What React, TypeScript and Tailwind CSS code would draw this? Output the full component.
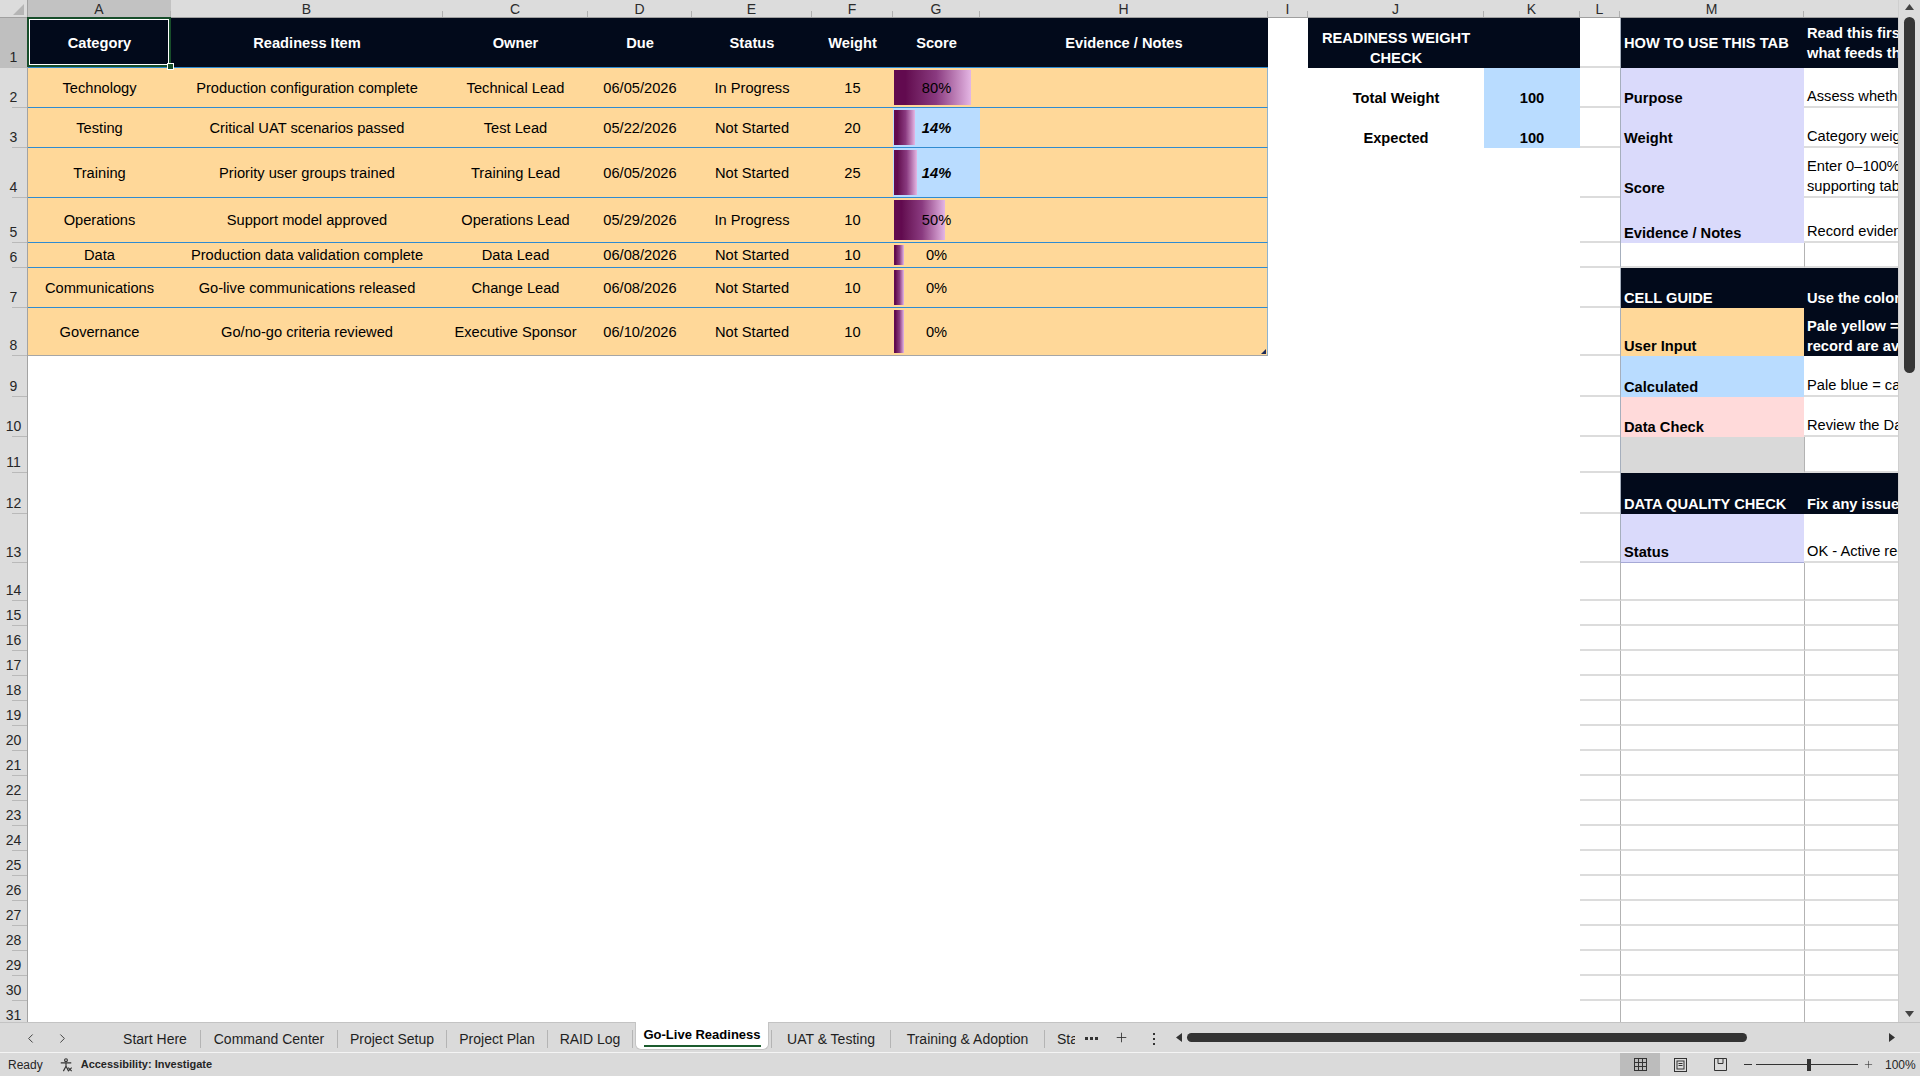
import React from "react";
import { ChevronLeft, ChevronRight, Plus } from "lucide-react";

type TRow = {
  cat: string;
  item: string;
  owner: string;
  due: string;
  status: string;
  weight: number;
  score: number;
  calc?: boolean;
  bar: number;
};

const tableRows: TRow[] = [
  { cat: "Technology", item: "Production configuration complete", owner: "Technical Lead", due: "06/05/2026", status: "In Progress", weight: 15, score: 80, bar: 77 },
  { cat: "Testing", item: "Critical UAT scenarios passed", owner: "Test Lead", due: "05/22/2026", status: "Not Started", weight: 20, score: 14, calc: true, bar: 21 },
  { cat: "Training", item: "Priority user groups trained", owner: "Training Lead", due: "06/05/2026", status: "Not Started", weight: 25, score: 14, calc: true, bar: 23 },
  { cat: "Operations", item: "Support model approved", owner: "Operations Lead", due: "05/29/2026", status: "In Progress", weight: 10, score: 50, bar: 51 },
  { cat: "Data", item: "Production data validation complete", owner: "Data Lead", due: "06/08/2026", status: "Not Started", weight: 10, score: 0, bar: 10 },
  { cat: "Communications", item: "Go-live communications released", owner: "Change Lead", due: "06/08/2026", status: "Not Started", weight: 10, score: 0, bar: 10 },
  { cat: "Governance", item: "Go/no-go criteria reviewed", owner: "Executive Sponsor", due: "06/10/2026", status: "Not Started", weight: 10, score: 0, bar: 10 },
];

const headers = ["Category", "Readiness Item", "Owner", "Due", "Status", "Weight", "Score", "Evidence / Notes"];
const colLetters = ["A", "B", "C", "D", "E", "F", "G", "H", "I", "J", "K", "L", "M", ""];

type PanelKind = "dark" | "lav" | "orange" | "blue" | "pink" | "grey" | "white";

const mSpec: { kind: PanelKind; text?: string }[] = [
  { kind: "dark", text: "HOW TO USE THIS TAB" },
  { kind: "lav", text: "Purpose" },
  { kind: "lav", text: "Weight" },
  { kind: "lav", text: "Score" },
  { kind: "lav", text: "Evidence / Notes" },
  { kind: "white" },
  { kind: "dark", text: "CELL GUIDE" },
  { kind: "orange", text: "User Input" },
  { kind: "blue", text: "Calculated" },
  { kind: "pink", text: "Data Check" },
  { kind: "grey" },
  { kind: "dark", text: "DATA QUALITY CHECK" },
  { kind: "lav", text: "Status" },
];

const mClass: Record<PanelKind, string> = {
  dark: "bg-[#020a1b] text-white font-bold",
  lav: "bg-[#dadafb] text-black font-bold",
  orange: "bg-[#ffd899] text-black font-bold",
  blue: "bg-[#b9dcff] text-black font-bold",
  pink: "bg-[#ffdada] text-black font-bold",
  grey: "bg-[#d9d9d9]",
  white: "bg-white border-b-2 border-[#dcdcdc]",
};

const nSpec: { dark?: boolean; lines: string[]; sideLine?: boolean }[] = [
  { dark: true, lines: ["Read this first to understand", "what feeds this tab."] },
  { lines: ["Assess whether the project is ready to go live."] },
  { lines: ["Category weights must add up to 100."] },
  { lines: ["Enter 0–100% or let the", "supporting tabs calculate it."] },
  { lines: ["Record evidence and sign-off links."] },
  { lines: [], sideLine: true },
  { dark: true, lines: ["Use the colors below to read each cell."] },
  { dark: true, lines: ["Pale yellow = enter or update. Values you", "record are available to the dashboard."] },
  { lines: ["Pale blue = calculated; do not overwrite."] },
  { lines: ["Review the Data Quality Check before sign-off."] },
  { lines: [], sideLine: true },
  { dark: true, lines: ["Fix any issues before go-live."] },
  { lines: ["OK - Active records are complete."] },
];

function RowHeader({ r }: { r: number }) {
  return (
    <div
      className={`flex flex-col justify-end border-r border-[#a3a3a3] ${
        r === 1 ? "bg-[#bfbfbf]" : "bg-[#dcdcdc]"
      }`}
    >
      <div className="text-center text-[14px] leading-[20px] text-[#262626]">{r}</div>
      <div className="ml-[12px] h-px bg-[#b9b9b9]" />
    </div>
  );
}

function cellsForRow(r: number): React.ReactNode[] {
  const out: React.ReactNode[] = [];
  out.push(<RowHeader key={`rh${r}`} r={r} />);

  if (r === 1) {
    headers.forEach((h, i) => {
      if (i === 0) {
        out.push(
          <div
            key={`c${r}-${i}`}
            className="relative flex items-center justify-center bg-[#020a1b] text-white font-bold border-b border-[#2f8bd1]"
          >
            {h}
            <div className="pointer-events-none absolute -left-[1px] -top-[1px] right-0 bottom-0 border-2 border-[#174d2a]">
              <div className="h-full w-full border border-white" />
            </div>
            <div className="absolute -right-[3px] -bottom-[3px] z-10 h-[7px] w-[7px] border border-white bg-[#174d2a]" />
          </div>
        );
      } else {
        out.push(
          <div
            key={`c${r}-${i}`}
            className="flex items-center justify-center whitespace-nowrap bg-[#020a1b] text-white font-bold border-b border-[#2f8bd1]"
          >
            {h}
          </div>
        );
      }
    });
  } else if (r >= 2 && r <= 8) {
    const d = tableRows[r - 2];
    const line = r === 8 ? "border-[#a6a6a6]" : "border-[#2f8bd1]";
    const vals = [d.cat, d.item, d.owner, d.due, d.status, String(d.weight)];
    vals.forEach((v, i) => {
      out.push(
        <div
          key={`c${r}-${i}`}
          className={`flex items-center justify-center whitespace-nowrap overflow-hidden bg-[#ffd899] border-b ${line}`}
        >
          {v}
        </div>
      );
    });
    out.push(
      <div
        key={`c${r}-g`}
        className={`relative flex items-center justify-center border-b ${line} ${
          d.calc ? "bg-[#b9dcff]" : "bg-[#ffd899]"
        }`}
      >
        <div
          className="absolute left-[1px] top-[2px] bottom-[2px] bg-linear-to-r from-[#620a4f] from-15% via-[#8a3a80] via-55% to-[#e4b6e4]"
          style={{ width: d.bar }}
        />
        <span className={`relative ${d.calc ? "font-bold italic" : ""}`}>{d.score}%</span>
      </div>
    );
    out.push(
      <div
        key={`c${r}-h`}
        className={`relative bg-[#ffd899] border-b ${line} border-r border-r-[#8fb3cf]`}
      >
        {r === 8 && (
          <svg className="absolute right-[1px] bottom-[1px]" width="5" height="5" viewBox="0 0 5 5">
            <polygon points="5,0 5,5 0,5" fill="#1b2a5a" />
          </svg>
        )}
      </div>
    );
  } else {
    for (let i = 0; i < 8; i++) out.push(<div key={`c${r}-${i}`} className="bg-white" />);
  }

  out.push(<div key={`c${r}-I`} className="bg-white" />);

  if (r === 1) {
    out.push(
      <div
        key={`c${r}-J`}
        className="flex flex-col items-center justify-end bg-[#020a1b] text-white font-bold leading-[20px]"
      >
        <span>READINESS WEIGHT</span>
        <span>CHECK</span>
      </div>
    );
    out.push(<div key={`c${r}-K`} className="bg-[#020a1b]" />);
  } else if (r === 2 || r === 3) {
    out.push(
      <div key={`c${r}-J`} className="flex items-end justify-center font-bold leading-[20px] bg-white">
        {r === 2 ? "Total Weight" : "Expected"}
      </div>
    );
    out.push(
      <div key={`c${r}-K`} className="flex items-end justify-center font-bold leading-[20px] bg-[#b9dcff]">
        100
      </div>
    );
  } else {
    out.push(<div key={`c${r}-J`} className="bg-white" />);
    out.push(<div key={`c${r}-K`} className="bg-white" />);
  }

  out.push(<div key={`c${r}-L`} className="bg-white border-b-2 border-[#dcdcdc]" />);

  if (r <= 13) {
    const m = mSpec[r - 1];
    out.push(
      <div
        key={`c${r}-M`}
        className={`flex whitespace-nowrap overflow-hidden pl-[3px] leading-[20px] border-l border-l-[#a6afbd] ${
          r === 1 ? "items-center" : "items-end"
        } ${mClass[m.kind]} ${r === 13 ? "border-b border-b-[#a6a9d6]" : ""}`}
      >
        {m.text}
      </div>
    );
    const n = nSpec[r - 1];
    out.push(
      <div
        key={`c${r}-N`}
        className={`flex flex-col overflow-hidden whitespace-nowrap pl-[3px] leading-[20px] ${
          r === 1 ? "justify-center" : "justify-end"
        } ${n.dark ? "bg-[#020a1b] text-white font-bold" : "bg-white text-black border-b-2 border-[#dcdcdc]"} ${
          n.sideLine ? "border-l border-l-[#b3b3b3]" : ""
        }`}
      >
        {n.lines.map((l, i) => (
          <span key={i}>{l}</span>
        ))}
      </div>
    );
  } else {
    out.push(
      <div key={`c${r}-M`} className="bg-white border-b-2 border-[#dcdcdc] border-l border-l-[#b3b3b3]" />
    );
    out.push(
      <div key={`c${r}-N`} className="bg-white border-b-2 border-[#dcdcdc] border-l border-l-[#b3b3b3]" />
    );
  }
  return out;
}

function Sep() {
  return <div className="mt-[2px] h-[18px] w-px bg-[#b4b4b4]" />;
}

export default function App() {
  const cells: React.ReactNode[] = [];
  cells.push(
    <div key="corner" className="relative border-r border-b border-[#a0a0a0] bg-[#dcdcdc]">
      <svg className="absolute right-[3px] bottom-[2px]" width="11" height="11" viewBox="0 0 11 11">
        <polygon points="11,0 11,11 0,11" fill="#b5b5b5" />
      </svg>
    </div>
  );
  colLetters.forEach((l, i) => {
    cells.push(
      <div
        key={`ch${i}`}
        className={`flex border-b border-[#9f9f9f] ${i === 0 ? "bg-[#c2c2c2]" : "bg-[#dcdcdc]"}`}
      >
        <div className="flex-1 text-center text-[14px] leading-[18px] text-[#2b2b2b]">{l}</div>
        {i < 13 && <div className="h-[6px] w-px self-end bg-[#b0b0b0]" />}
      </div>
    );
  });
  for (let r = 1; r <= 31; r++) cells.push(...cellsForRow(r));

  return (
    <div className="flex h-[1076px] w-[1920px] flex-col overflow-hidden bg-white font-['Liberation_Sans',Arial,sans-serif] text-black">
      <div className="flex h-[1022px]">
        <div className="h-full w-[1898px] overflow-hidden">
          <div className="grid grid-cols-[28px_143px_272px_145px_104px_120px_81px_87px_288px_40px_176px_96px_40px_184px_94px] grid-rows-[18px_50px_40px_40px_50px_45px_25px_40px_48px_41px_40px_36px_41px_49px_38px_repeat(17,25px)] text-[14.67px]">
            {cells}
          </div>
        </div>
        <div className="flex h-full w-[22px] flex-col items-center border-l border-[#cfcfcf] bg-[#dcdcdc]">
          <svg className="mt-[4px]" width="9" height="6" viewBox="0 0 9 6">
            <polygon points="4.5,0 9,6 0,6" fill="#444" />
          </svg>
          <div className="mt-[7px] h-[356px] w-[11px] rounded-full bg-[#363636]" />
          <div className="flex-1" />
          <svg className="mb-[5px]" width="9" height="6" viewBox="0 0 9 6">
            <polygon points="0,0 9,0 4.5,6" fill="#444" />
          </svg>
        </div>
      </div>

      <div className="flex h-[30px] items-center border-t border-[#c3c3c3] bg-[#dadada] text-[14px] text-[#1f1f1f]">
        <div className="flex h-full w-[110px] items-center pt-[2px]">
          <ChevronLeft className="ml-[23px]" size={15} strokeWidth={1.6} color="#444" />
          <ChevronRight className="ml-[17px]" size={15} strokeWidth={1.6} color="#444" />
        </div>
        <div className="flex h-full w-[90px] items-center justify-center whitespace-nowrap pt-[3px]">Start Here</div>
        <Sep />
        <div className="flex h-full w-[136px] items-center justify-center whitespace-nowrap pt-[3px]">Command Center</div>
        <Sep />
        <div className="flex h-full w-[108px] items-center justify-center whitespace-nowrap pt-[3px]">Project Setup</div>
        <Sep />
        <div className="flex h-full w-[100px] items-center justify-center whitespace-nowrap pt-[3px]">Project Plan</div>
        <Sep />
        <div className="flex h-full w-[84px] items-center justify-center whitespace-nowrap pt-[3px]">RAID Log</div>
        <Sep />
        <div className="flex h-full w-[138px] justify-center">
          <div className="-mt-px flex h-[28px] w-[134px] flex-col items-center rounded-b-[6px] border-x border-b border-[#c4c4c4] bg-white pt-[4px]">
            <span className="whitespace-nowrap text-[13px] font-bold leading-[18px] text-black">Go-Live Readiness</span>
            <div className="mt-[1px] h-[2px] w-[117px] bg-[#1c5c2e]" />
          </div>
        </div>
        <Sep />
        <div className="flex h-full w-[118px] items-center justify-center whitespace-nowrap pt-[3px]">UAT &amp; Testing</div>
        <Sep />
        <div className="flex h-full w-[153px] items-center justify-center whitespace-nowrap pt-[3px]">Training &amp; Adoption</div>
        <Sep />
        <div className="flex h-full w-[30px] items-center overflow-hidden whitespace-nowrap pl-[12px] pt-[3px]">Status</div>
        <div className="flex h-full w-[32px] items-center justify-center gap-[2px] pt-[2px]">
          <div className="h-[3px] w-[3px] bg-[#333]" />
          <div className="h-[3px] w-[3px] bg-[#333]" />
          <div className="h-[3px] w-[3px] bg-[#333]" />
        </div>
        <div className="flex h-full w-[28px] items-center justify-center">
          <Plus size={15} strokeWidth={1.4} color="#333" />
        </div>
        <div className="flex h-full w-[38px] flex-col items-center justify-center gap-[3px] pt-[2px]">
          <div className="h-[2px] w-[2px] bg-[#333]" />
          <div className="h-[2px] w-[2px] bg-[#333]" />
          <div className="h-[2px] w-[2px] bg-[#333]" />
        </div>
        <div className="flex h-full w-[12px] items-center justify-center">
          <svg width="6" height="9" viewBox="0 0 6 9">
            <polygon points="6,0 6,9 0,4.5" fill="#333" />
          </svg>
        </div>
        <div className="ml-[2px] h-[9px] w-[560px] rounded-full bg-[#333333]" />
        <div className="flex-1" />
        <div className="mr-[22px] flex h-full w-[12px] items-center justify-center">
          <svg width="6" height="9" viewBox="0 0 6 9">
            <polygon points="0,0 6,4.5 0,9" fill="#333" />
          </svg>
        </div>
      </div>

      <div className="flex h-[24px] items-center border-t border-[#f4f4f4] bg-[#dadada] text-[12px] text-[#262626]">
        <span className="ml-[8px]">Ready</span>
        <svg className="ml-[16px]" width="14" height="14" viewBox="0 0 16 16" fill="none" stroke="#333" strokeWidth="1.3">
          <circle cx="8" cy="2.5" r="1.6" />
          <path d="M2 5.5h12M8 5.5v4M8 9.5l-3 5.5M8 9.5l3 5.5" />
          <path d="M10.5 11l4 4M14.5 11l-4 4" />
        </svg>
        <span className="ml-[8px] text-[11px] font-bold">Accessibility: Investigate</span>
        <div className="ml-auto flex h-full items-center">
          <div className="flex h-full w-[40px] items-center justify-center bg-[#bcbcbc]">
            <svg width="13" height="13" viewBox="0 0 13 13" fill="none" stroke="#333">
              <rect x="0.5" y="0.5" width="12" height="12" />
              <path d="M4.5 .5v12M8.5 .5v12M.5 4.5h12M.5 8.5h12" />
            </svg>
          </div>
          <div className="flex h-full w-[40px] items-center justify-center">
            <svg width="13" height="14" viewBox="0 0 13 14" fill="none" stroke="#333">
              <rect x="0.5" y="0.5" width="12" height="13" />
              <rect x="3" y="3" width="7" height="8" />
              <path d="M4.5 5.5h4M4.5 7.5h4" />
            </svg>
          </div>
          <div className="flex h-full w-[40px] items-center justify-center">
            <svg width="13" height="13" viewBox="0 0 13 13" fill="none" stroke="#333">
              <path d="M.5 .5h12v12h-12z M4 .5v5h5v-5" />
            </svg>
          </div>
          <div className="flex h-full w-[16px] items-center justify-center">
            <div className="h-px w-[8px] bg-[#333]" />
          </div>
          <div className="flex h-full items-center">
            <div className="h-px w-[51px] bg-[#333]" />
            <div className="h-[12px] w-[4px] bg-[#333]" />
            <div className="h-px w-[47px] bg-[#333]" />
          </div>
          <div className="flex h-full w-[20px] items-center justify-center">
            <Plus size={11} strokeWidth={1.3} color="#333" />
          </div>
          <div className="w-[42px] pl-[7px] text-[12px]">100%</div>
        </div>
      </div>
    </div>
  );
}
